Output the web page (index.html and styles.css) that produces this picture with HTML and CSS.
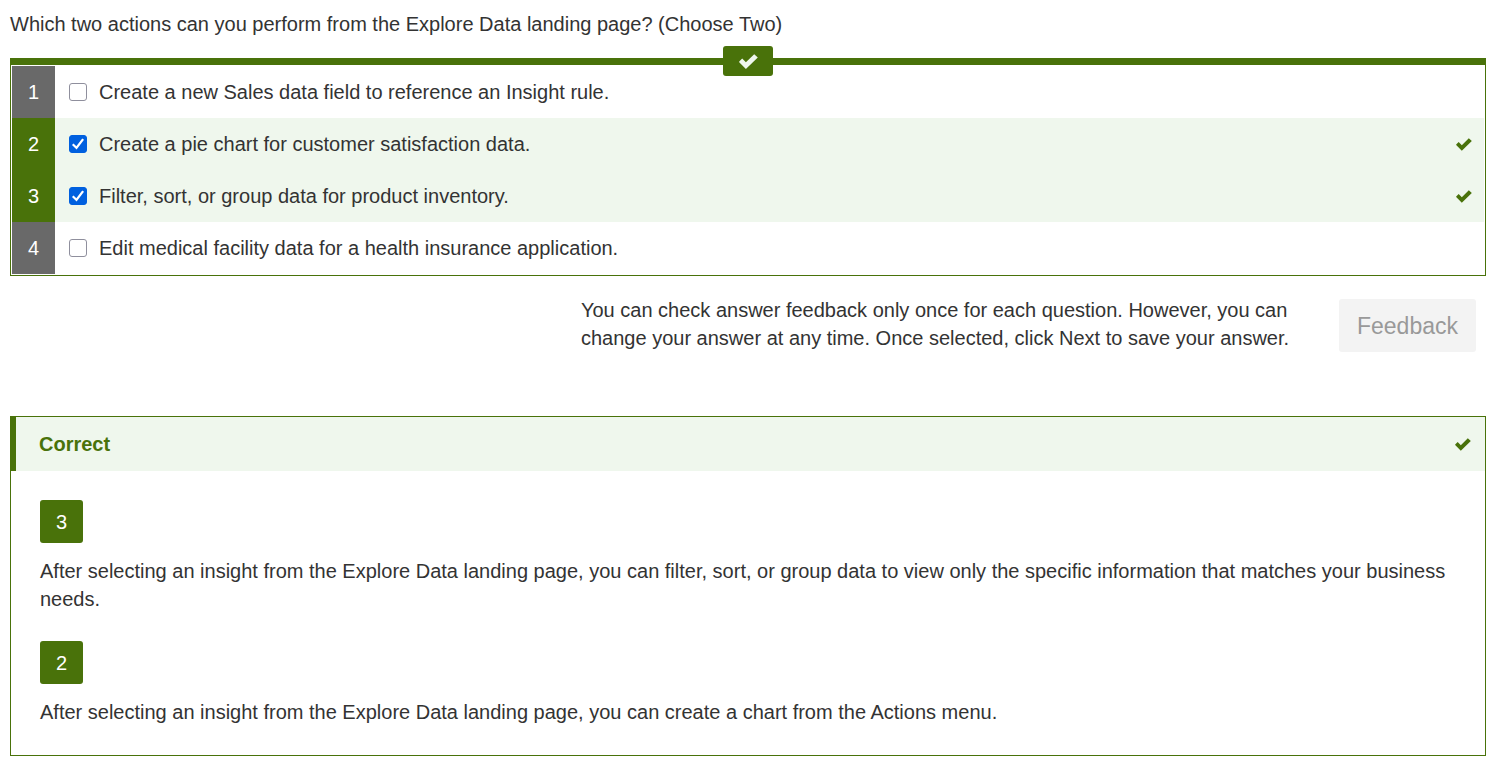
FILE: index.html
```html
<!DOCTYPE html>
<html lang="en">
<head>
<meta charset="utf-8">
<meta name="viewport" content="width=device-width, initial-scale=1">
<title>Quiz question</title>
<link rel="stylesheet" href="styles.css">
</head>
<body>
<svg class="sprite" aria-hidden="true">
  <symbol id="check" viewBox="0 0 19 15">
    <path d="M.2 7.6 3.2 4.6 6.9 8.3 15.2.2 18.8 3.4 6.9 14.9.2 8.2Z"/>
  </symbol>
</svg>
<main class="quiz">
  <p class="question" id="question">Which two actions can you perform from the Explore Data landing page? (Choose Two)</p>

  <section class="answers" role="group" aria-labelledby="question">
    <span class="status"><svg class="status-icon" role="img" aria-label="Correct"><use href="#check"/></svg></span>
    <div class="answer">
      <span class="number">1</span>
      <input class="tick" type="checkbox" id="a1">
      <label class="text" for="a1">Create a new Sales data field to reference an Insight rule.</label>
    </div>
    <div class="answer correct">
      <span class="number">2</span>
      <input class="tick" type="checkbox" id="a2" checked>
      <label class="text" for="a2">Create a pie chart for customer satisfaction data.</label>
      <svg class="mark" aria-hidden="true"><use href="#check"/></svg>
    </div>
    <div class="answer correct">
      <span class="number">3</span>
      <input class="tick" type="checkbox" id="a3" checked>
      <label class="text" for="a3">Filter, sort, or group data for product inventory.</label>
      <svg class="mark" aria-hidden="true"><use href="#check"/></svg>
    </div>
    <div class="answer">
      <span class="number">4</span>
      <input class="tick" type="checkbox" id="a4">
      <label class="text" for="a4">Edit medical facility data for a health insurance application.</label>
    </div>
  </section>

  <div class="actions">
    <p class="hint">You can check answer feedback only once for each question. However, you can change your answer at any time. Once selected, click Next to save your answer.</p>
    <button class="feedback-button" type="button" disabled>Feedback</button>
  </div>

  <section class="result">
    <header class="result-header">
      <h2 class="result-title">Correct</h2>
      <svg class="mark" aria-hidden="true"><use href="#check"/></svg>
    </header>
    <div class="result-body">
      <div class="explanation">
        <span class="number badge">3</span>
        <p>After selecting an insight from the Explore Data landing page, you can filter, sort, or group data to view only the specific information that matches your business needs.</p>
      </div>
      <div class="explanation">
        <span class="number badge">2</span>
        <p>After selecting an insight from the Explore Data landing page, you can create a chart from the Actions menu.</p>
      </div>
    </div>
  </section>
</main>
</body>
</html>
```
FILE: styles.css
```css
:root {
  --green: #49720a;
  --pale: #eff7ed;
  --gray: #696969;
}

* { box-sizing: border-box; }

body {
  margin: 0;
  padding: 10px 16px 9px 10px;
  background: #fff;
  color: #333;
  font: 20px/28px "Liberation Sans", Arial, sans-serif;
}

p, h2 { margin: 0; }

.sprite {
  position: absolute;
  width: 0;
  height: 0;
}

.question { margin-bottom: 20px; }

.answers {
  position: relative;
  padding: 1px;
  border: 1px solid var(--green);
  border-top-width: 7px;
}

.status {
  position: absolute;
  top: -19px;
  left: 50%;
  transform: translateX(-50%);
  display: flex;
  align-items: center;
  justify-content: center;
  width: 50px;
  height: 30px;
  border-radius: 3px;
  background: var(--green);
}

.status-icon {
  width: 19px;
  height: 15px;
  fill: var(--pale);
}

.answer {
  display: flex;
  align-items: center;
  min-height: 52px;
  padding-right: 12px;
}

.answer.correct { background: var(--pale); }

.number {
  display: flex;
  flex: none;
  align-items: center;
  justify-content: center;
  align-self: stretch;
  width: 43px;
  background: var(--gray);
  color: #fff;
}

.correct .number { background: var(--green); }

.tick {
  flex: none;
  appearance: none;
  display: grid;
  place-items: center;
  width: 18px;
  height: 18px;
  margin: 0 12px 0 14px;
  border: 1px solid #8f8f9d;
  border-radius: 3px;
  background: #fff;
}

.tick:checked {
  border-color: #0060df;
  background: #0060df;
}

.tick:checked::before {
  content: "";
  width: 14px;
  height: 14px;
  background: #fff;
  clip-path: polygon(7% 57%, 18% 46%, 38% 66%, 80% 10%, 93% 20%, 40% 89%);
}

.text { flex: 1; }

.mark {
  flex: none;
  width: 16px;
  height: 13px;
  fill: var(--green);
}

.actions {
  display: flex;
  align-items: flex-end;
  justify-content: flex-end;
  gap: 48px;
  margin: 20px 10px 64px 0;
}

.hint { max-width: 710px; }

.feedback-button {
  flex: none;
  padding: 13px 18px 12px;
  border: 0;
  border-radius: 3px;
  background: #f3f3f3;
  color: #999;
  font: inherit;
  font-size: 23px;
}

.result { border: 1px solid var(--green); }

.result-header {
  display: flex;
  align-items: center;
  justify-content: space-between;
  padding: 13px 14px 13px 23px;
  border-left: 5px solid var(--green);
  background: var(--pale);
}

.result-title {
  color: var(--green);
  font-size: 20px;
}

.result-body {
  display: grid;
  gap: 28px;
  padding: 29px;
}

.explanation {
  display: grid;
  justify-items: start;
  gap: 14px;
}

.badge {
  height: 43px;
  border-radius: 3px;
  background: var(--green);
}
```
